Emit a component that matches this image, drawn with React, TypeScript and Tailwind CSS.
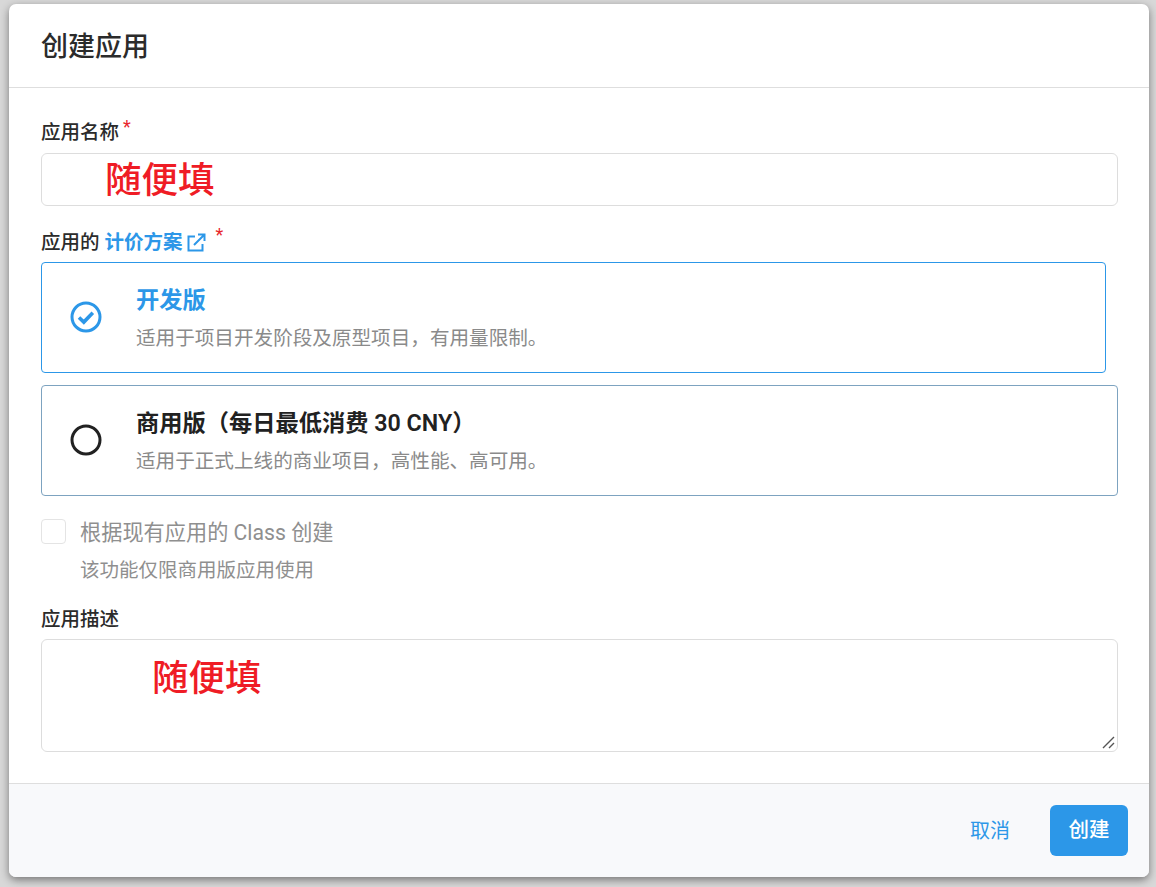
const cjk = "font-['Roboto','Noto_Sans_CJK_SC',sans-serif]"

function Star({ className }: { className: string }) {
  return <span className={`text-[#e8262d] text-lg leading-none ${className}`}>*</span>
}

function PlanCard({
  title,
  desc,
  active,
  extra,
}: {
  title: string
  desc: string
  active?: boolean
  extra: string
}) {
  return (
    <div className={`h-[111px] rounded border flex items-center pl-[28px] ${extra}`}>
      {active ? (
        <svg width="32" height="32" viewBox="0 0 32 32" fill="none" className="shrink-0 mb-[2px]">
          <circle cx="16" cy="16" r="14" stroke="#2c97e8" strokeWidth="3" />
          <path d="M9 16.5l4.8 4.6 9-9.4" stroke="#2c97e8" strokeWidth="3.6" />
        </svg>
      ) : (
        <svg width="32" height="32" viewBox="0 0 32 32" fill="none" className="shrink-0 mb-[2px]">
          <circle cx="16" cy="16" r="14" stroke="#212121" strokeWidth="3" />
        </svg>
      )}
      <div className="ml-[34px] pt-[2px]">
        <div className={`text-[23.25px] leading-7 font-semibold ${active ? 'text-[#2c97e8]' : 'text-[#212121]'}`}>{title}</div>
        <div className="mt-[13px] text-[19.6px] leading-6 text-[#8a8a8a]">{desc}</div>
      </div>
    </div>
  )
}

export default function App() {
  return (
    <div className={`h-[887px] bg-[#d8d8d8] pt-[4px] pl-[9px] overflow-hidden ${cjk}`}>
      <div className="w-[1140px] h-[873px] bg-white rounded-[7px] shadow-[0_3px_9px_rgba(0,0,0,0.45)] flex flex-col overflow-hidden">
        {/* Header */}
        <div className="h-[84px] shrink-0 border-b border-[#dedede] flex items-center px-8 pt-1">
          <h1 className="text-[27px] font-medium text-[#2b2b2b]">创建应用</h1>
        </div>

        {/* Body */}
        <div className="flex-1 px-8 pt-[30px]">
          <div className="flex h-[35px] text-[#2b2b2b]">
            <label className="text-[19.5px] leading-[30px] font-medium">应用名称</label>
            <Star className="ml-1" />
          </div>
          <div className="h-[53px] w-[1077px] rounded-md border border-[#dddddd] flex items-center pl-[63px] pt-1">
            <span className="text-[36.5px] leading-none font-medium text-[#ef1c25]">随便填</span>
          </div>

          <div className="flex items-start h-[56px] mt-[18px] text-[#2b2b2b]">
            <label className="text-[19.5px] leading-[38px] font-medium">应用的</label>
            <a className="ml-[5px] text-[19.5px] leading-[38px] font-semibold text-[#2c97e8]">计价方案</a>
            <svg width="22" height="22" viewBox="0 0 22 22" fill="none" className="ml-[2px] mt-2" stroke="#2c97e8" strokeWidth="2">
              <path d="M10 4.5H3.5v14h14V12" />
              <path d="M9 13L19 3M13 2.5h6.5V9" />
            </svg>
            <Star className="ml-[9px] mt-[2px]" />
          </div>

          <div className="flex flex-col -mt-[18px] gap-3 w-[1077px]">
            <PlanCard
              active
              title="开发版"
              desc="适用于项目开发阶段及原型项目，有用量限制。"
              extra="border-[#2c97e8] mr-3"
            />
            <PlanCard
              title="商用版（每日最低消费 30 CNY）"
              desc="适用于正式上线的商业项目，高性能、高可用。"
              extra="border-[#7da3c0]"
            />
          </div>

          <div className="flex items-center mt-[21px] h-[29px]">
            <span className="w-[25px] h-[25px] rounded border border-[#e4e4e4] bg-white" />
            <span className="ml-[14px] pt-0.5 text-[21.2px] text-[#8f8f8f]">根据现有应用的 Class 创建</span>
          </div>
          <div className="ml-[39px] mt-[13px] text-[19.5px] leading-6 text-[#8f8f8f]">该功能仅限商用版应用使用</div>

          <label className="block mt-[23px] text-[19.5px] leading-7 font-medium text-[#2b2b2b]">应用描述</label>
          <div className="relative mt-[5px] h-[113px] w-[1077px] rounded-md border border-[#dddddd] pl-[110px] pt-[21px]">
            <span className="block text-[36.5px] leading-none font-medium text-[#ef1c25]">随便填</span>
            <svg width="13" height="13" viewBox="0 0 13 13" className="absolute right-[2px] bottom-[2px]" stroke="#555555" strokeWidth="1.4">
              <path d="M1 12L12 1M7 12l5-5" />
            </svg>
          </div>
        </div>

        {/* Footer */}
        <div className="h-[94px] shrink-0 bg-[#f8f9fb] border-t border-[#dedede] flex items-center justify-end pr-[21px]">
          <button className="text-[20px] text-[#2c97e8] mr-10">取消</button>
          <button className="w-[78px] h-[51px] rounded-md bg-[#2c97e8] text-white text-[20.5px] font-medium">创建</button>
        </div>
      </div>
    </div>
  )
}
